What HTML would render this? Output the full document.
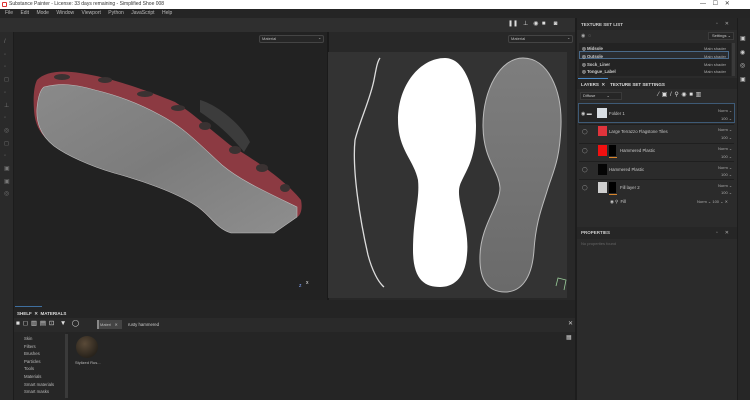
<!DOCTYPE html>
<html><head><meta charset="utf-8"><style>
*{margin:0;padding:0;box-sizing:border-box}
body{width:750px;height:400px;overflow:hidden;background:#2b2b2b;font-family:"Liberation Sans",sans-serif;font-size:5px;color:#c8c8c8;position:relative}
.a{position:absolute}
.t{position:absolute;white-space:nowrap;line-height:1}
.n{position:absolute;white-space:nowrap;line-height:1;font-size:4px;color:#aaa;left:718px}
</style></head><body>
<!-- title -->
<div class="a" style="left:0;top:0;width:750px;height:9px;background:#fff"></div>
<div class="a" style="left:2px;top:2px;width:5px;height:5px;border:1px solid #d33;border-radius:1px"></div>
<div class="t" style="left:9px;top:2px;color:#333;font-size:5px">Substance Painter - License: 33 days remaining - Simplified Shoe 008</div>
<div class="t" style="left:700px;top:1px;color:#333;font-size:6px">—&nbsp;&nbsp;&nbsp;&nbsp;☐&nbsp;&nbsp;&nbsp;&nbsp;✕</div>
<!-- menu -->
<div class="a" style="left:0;top:9px;width:750px;height:9px;background:#252525"></div>
<div class="t" style="left:5px;top:11px;color:#bbb;word-spacing:6px">File Edit Mode Window Viewport Python JavaScript Help</div>
<!-- toolbar -->
<div class="a" style="left:0;top:18px;width:577px;height:14px;background:#2f2f2f"></div>
<div class="t" style="left:508px;top:21px;color:#ddd;font-size:6px">❚❚&nbsp;&nbsp;&nbsp;⊥&nbsp;&nbsp;&nbsp;◉&nbsp;&nbsp;■&nbsp;&nbsp;&nbsp;&nbsp;&nbsp;◙</div>
<!-- left strip -->
<div class="a" style="left:0;top:32px;width:14px;height:368px;background:#2a2a2a;border-right:1px solid #1c1c1c"></div>
<div class="t" style="left:4px;top:36px;color:#777;font-size:6px;line-height:12.7px;white-space:pre">/
◦
◦
◻
◦
⊥
◦
◎
◻
◦
▣
▣
◎</div>
<!-- 3D viewport -->
<div class="a" style="left:14px;top:32px;width:313px;height:268px;background:#222"></div>
<div class="a" style="left:259px;top:35px;width:65px;height:8px;border:1px solid #444;background:#262626;border-radius:2px"></div>
<div class="t" style="left:262px;top:37px;color:#bbb;font-size:4px">Material</div>
<div class="t" style="left:318px;top:36px;color:#bbb;font-size:4px">⌄</div>
<svg class="a" style="left:0;top:0" width="330" height="300">
<defs>
<linearGradient id="g1" x1="0" y1="0" x2="1" y2="1"><stop offset="0" stop-color="#8a8a8a"/><stop offset="0.5" stop-color="#7c7c7c"/><stop offset="1" stop-color="#8e8e8e"/></linearGradient>
</defs>
<path d="M37,80 C45,72 60,70 80,73 C114,78 150,92 175,102 C195,115 205,125 230,145 C255,160 285,180 301,200 C303,210 300,216 297,217 L274,233 L231,233 C215,228 210,215 195,205 C175,192 140,180 114,173 C90,165 64,153 54,145 C40,135 35,125 34,110 C33,97 34,86 37,80Z" fill="#8c3a42"/>
<path d="M200,100 C215,104 240,122 250,142 L244,152 C228,132 212,120 200,112Z" fill="#3c3c3c"/>
<g fill="#3a3232">
<ellipse cx="62" cy="77" rx="8" ry="3"/><ellipse cx="105" cy="80" rx="7" ry="3"/><ellipse cx="145" cy="94" rx="8" ry="3"/>
<ellipse cx="178" cy="108" rx="7" ry="3"/><ellipse cx="205" cy="126" rx="6" ry="4"/><ellipse cx="235" cy="150" rx="6" ry="4"/>
<ellipse cx="262" cy="168" rx="6" ry="4"/><ellipse cx="285" cy="188" rx="5" ry="4"/>
</g>
<path d="M44,87 C60,83 75,84 95,90 C120,96 140,104 160,115 C185,128 200,145 222,165 C240,180 262,190 297,207 L297,217 L274,233 L231,233 C215,228 210,214 195,205 C175,192 140,180 114,173 C90,166 66,155 54,146 C40,135 36,122 37,108 C38,97 40,90 44,87Z" fill="url(#g1)" stroke="#bbb" stroke-width="0.6"/>
<text x="299" y="287" fill="#8af" font-size="5" font-family="Liberation Sans">z</text><text x="306" y="284" fill="#eee" font-size="5" font-family="Liberation Sans">x</text>
</svg>
<!-- separator -->
<div class="a" style="left:327px;top:32px;width:2px;height:268px;background:#1a1a1a"></div>
<!-- 2D viewport -->
<div class="a" style="left:329px;top:32px;width:246px;height:268px;background:#282828"></div>
<div class="a" style="left:508px;top:35px;width:65px;height:8px;border:1px solid #444;background:#262626;border-radius:2px"></div>
<div class="t" style="left:511px;top:37px;color:#bbb;font-size:4px">Material</div>
<div class="t" style="left:567px;top:36px;color:#bbb;font-size:4px">⌄</div>
<div class="a" style="left:328px;top:52px;width:239px;height:246px;background:#333"></div>
<svg class="a" style="left:0;top:0" width="580" height="300">
<defs><linearGradient id="g2" x1="0" y1="0" x2="0" y2="1"><stop offset="0" stop-color="#7e7e7e"/><stop offset="1" stop-color="#6a6a6a"/></linearGradient></defs>
<path d="M380,58 C377,62 376,70 374,80 C370,100 360,120 355,140 C352,170 360,220 368,255 C372,270 378,282 384,287" fill="none" stroke="#ddd" stroke-width="1.3"/>
<path d="M445,58 C465,58 476,90 476,125 C476,160 466,170 460,185 C455,200 470,225 467,255 C465,280 452,287 440,287 C425,287 413,280 413,250 C413,215 420,200 418,180 C414,160 398,150 398,120 C398,85 420,58 445,58Z" fill="#fff"/>
<path d="M523,58 C548,58 562,90 561,125 C560,160 553,172 548,188 C543,205 536,220 534,250 C532,280 520,292 505,292 C488,292 479,280 480,255 C481,225 500,205 500,188 C499,170 483,160 483,125 C483,90 500,58 523,58Z" fill="url(#g2)" stroke="#bbb" stroke-width="1"/>
<path d="M556,286 L558,278 L566,280 L564,290" fill="none" stroke="#9c9" stroke-width="0.8"/>
</svg>
<!-- right panel -->
<div class="a" style="left:575px;top:18px;width:2px;height:382px;background:#1d1d1d"></div>
<div class="a" style="left:577px;top:18px;width:160px;height:382px;background:#2b2b2b"></div>
<div class="a" style="left:737px;top:18px;width:13px;height:382px;background:#262626;border-left:1px solid #1c1c1c"></div>
<div class="t" style="left:740px;top:33px;color:#ccc;font-size:6px;line-height:13.5px;white-space:pre">▣
◉
◎
▣</div>
<div class="a" style="left:577px;top:18px;width:160px;height:12px;background:#262626"></div>
<div class="t" style="left:581px;top:23px;font-weight:bold;font-size:4.5px;color:#ccc">TEXTURE SET LIST</div>
<div class="t" style="left:716px;top:22px;color:#aaa">▫&nbsp;&nbsp;&nbsp;&nbsp;&nbsp;✕</div>
<div class="t" style="left:581px;top:34px;color:#aaa">◉&nbsp;&nbsp;◌</div>
<div class="a" style="left:708px;top:32px;width:26px;height:8px;background:#262626;border:1px solid #3c3c3c"></div>
<div class="t" style="left:712px;top:34px;font-size:4px">Settings ⌄</div>
<div class="a" style="left:579px;top:43px;width:152px;height:33px;background:#232323"></div>
<div class="a" style="left:579px;top:51px;width:150px;height:8px;border:1px solid #4a6a8a;background:#2a2d31"></div>
<div class="t" style="left:582px;top:45px;font-size:4.3px;line-height:7.8px;white-space:pre;font-weight:bold;color:#ccc">◎ Midsole
◎ Outsole
◎ Sock_Liner
◎ Tongue_Label</div>
<div class="t" style="left:704px;top:45px;font-size:4px;line-height:7.8px;white-space:pre;color:#aaa">Main shader
Main shader
Main shader
Main shader</div>
<div class="a" style="left:732px;top:43px;width:3px;height:33px;background:#3a3a3a"></div>
<!-- layers tabs -->
<div class="a" style="left:577px;top:78px;width:160px;height:11px;background:#262626"></div>
<div class="a" style="left:578px;top:78px;width:30px;height:1px;background:#4a8ac8"></div>
<div class="t" style="left:581px;top:83px;font-weight:bold;font-size:4.5px;color:#ddd">LAYERS&nbsp;&nbsp;✕&nbsp;&nbsp;&nbsp;&nbsp;TEXTURE SET SETTINGS</div>
<div class="a" style="left:580px;top:92px;width:42px;height:8px;background:#262626;border:1px solid #3a3a3a"></div>
<div class="t" style="left:583px;top:94px;font-size:4px">Diffuse&nbsp;&nbsp;&nbsp;&nbsp;&nbsp;&nbsp;&nbsp;&nbsp;&nbsp;&nbsp;⌄</div>
<div class="t" style="left:658px;top:92px;font-size:6px;color:#ddd;word-spacing:1px">⁄ ▣ / ⚲ ◉ ■ ▥</div>
<!-- layers -->
<div class="a" style="left:578px;top:103px;width:157px;height:20px;background:#242424;border:1px solid #3e5a76"></div>
<div class="t" style="left:581px;top:112px;font-size:5px;color:#ccc">◉ ▬</div>
<div class="a" style="left:597px;top:108px;width:10px;height:10px;background:#d8dde2"></div>
<div class="t" style="left:609px;top:112px;font-size:4.3px">Folder 1</div>
<div class="a" style="left:579px;top:124px;width:155px;height:1px;background:#1f1f1f"></div>
<div class="t" style="left:582px;top:130px;color:#aaa">◯</div>
<div class="a" style="left:598px;top:126px;width:9px;height:10px;background:#e0343c"></div>
<div class="t" style="left:609px;top:130px;font-size:4.3px">Large Terrazzo Flagstone Tiles</div>
<div class="a" style="left:579px;top:143px;width:155px;height:1px;background:#1f1f1f"></div>
<div class="t" style="left:582px;top:149px;color:#aaa">◯</div>
<div class="a" style="left:598px;top:145px;width:9px;height:11px;background:#f01010"></div>
<div class="a" style="left:609px;top:145px;width:7px;height:11px;background:#000"></div>
<div class="a" style="left:609px;top:157px;width:8px;height:1px;background:#d8842a"></div>
<div class="t" style="left:620px;top:149px;font-size:4.3px">Hammered Plastic</div>
<div class="a" style="left:579px;top:161px;width:155px;height:1px;background:#1f1f1f"></div>
<div class="t" style="left:582px;top:168px;color:#aaa">◯</div>
<div class="a" style="left:598px;top:164px;width:9px;height:11px;background:#050505"></div>
<div class="t" style="left:609px;top:168px;font-size:4.3px">Hammered Plastic</div>
<div class="a" style="left:579px;top:179px;width:155px;height:1px;background:#1f1f1f"></div>
<div class="t" style="left:582px;top:186px;color:#aaa">◯</div>
<div class="a" style="left:598px;top:182px;width:9px;height:11px;background:#d0d0d0"></div>
<div class="a" style="left:609px;top:182px;width:7px;height:11px;background:#000"></div>
<div class="a" style="left:609px;top:194px;width:8px;height:1px;background:#d8842a"></div>
<div class="t" style="left:620px;top:186px;font-size:4.3px">Fill layer 2</div>
<div class="t" style="left:610px;top:200px;font-size:4.3px">◉ ⚲&nbsp;&nbsp;Fill</div>
<div class="t" style="left:697px;top:200px;font-size:4px;color:#aaa">Norm ⌄ 100 ⌄ ✕</div>
<div class="n" style="top:109px">Norm ⌄</div><div class="n" style="top:117px;left:721px">100 ⌄</div>
<div class="n" style="top:128px">Norm ⌄</div><div class="n" style="top:136px;left:721px">100 ⌄</div>
<div class="n" style="top:147px">Norm ⌄</div><div class="n" style="top:155px;left:721px">100 ⌄</div>
<div class="n" style="top:166px">Norm ⌄</div><div class="n" style="top:173px;left:721px">100 ⌄</div>
<div class="n" style="top:184px">Norm ⌄</div><div class="n" style="top:191px;left:721px">100 ⌄</div>
<!-- properties -->
<div class="a" style="left:577px;top:227px;width:160px;height:12px;background:#262626"></div>
<div class="t" style="left:581px;top:231px;font-weight:bold;font-size:4.5px;color:#ccc">PROPERTIES</div>
<div class="t" style="left:716px;top:231px;color:#aaa">▫&nbsp;&nbsp;&nbsp;&nbsp;&nbsp;✕</div>
<div class="t" style="left:581px;top:242px;font-size:4px;color:#666">No properties found</div>
<!-- shelf -->
<div class="a" style="left:14px;top:300px;width:561px;height:100px;background:#242424"></div>
<div class="a" style="left:15px;top:306px;width:27px;height:1px;background:#3f6f9f"></div>
<div class="t" style="left:17px;top:312px;font-weight:bold;font-size:4.5px;color:#ddd">SHELF&nbsp;&nbsp;✕&nbsp;&nbsp;MATERIALS</div>
<div class="a" style="left:14px;top:318px;width:561px;height:14px;background:#2a2a2a"></div>
<div class="t" style="left:16px;top:321px;font-size:6.5px;color:#ddd;word-spacing:1px">■ ◻ ▥ ▤ ⊡&nbsp;&nbsp;▼&nbsp;&nbsp;◯</div>
<div class="a" style="left:97px;top:320px;width:25px;height:9px;background:#444;border-left:2px solid #888"></div>
<div class="t" style="left:100px;top:323px;font-size:4px;color:#bbb">Materi&nbsp;&nbsp;&nbsp;✕</div>
<div class="t" style="left:128px;top:323px;font-size:4.3px;color:#ccc">rusty hammered</div>
<div class="t" style="left:568px;top:321px;font-size:6px;color:#ccc">✕</div>
<div class="a" style="left:14px;top:332px;width:52px;height:68px;background:#262626"></div>
<div class="t" style="left:24px;top:335px;font-size:4.3px;line-height:7.6px;white-space:pre;color:#bbb">Skin
Filters
Brushes
Particles
Tools
Materials
Smart materials
Smart masks</div>
<div class="a" style="left:65px;top:334px;width:3px;height:64px;background:#3a3a3a"></div>
<div class="a" style="left:70px;top:332px;width:505px;height:68px;background:#252525"></div>
<div class="a" style="left:76px;top:336px;width:22px;height:22px;border-radius:50%;background:radial-gradient(circle at 40% 35%,#5a4a38,#2a241c 70%,#1a1a1a)"></div>
<div class="t" style="left:75px;top:361px;font-size:4px;color:#bbb">Stylized Rus...</div>
<div class="t" style="left:566px;top:335px;font-size:6px;color:#ccc">▦</div>
</body></html>
